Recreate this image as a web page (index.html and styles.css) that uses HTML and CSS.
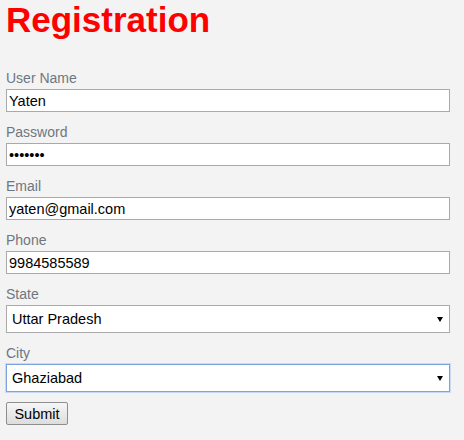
FILE: index.html
```html
<!DOCTYPE html>
<html>
<head>
<meta charset="utf-8">
<link rel="stylesheet" href="styles.css">
</head>
<body>
<h1 class="title">Registration</h1>
<form class="form">
  <div class="field">
    <label class="label">User Name</label>
    <input class="input" type="text" value="Yaten">
  </div>
  <div class="field">
    <label class="label">Password</label>
    <input class="input" type="password" value="1234567">
  </div>
  <div class="field">
    <label class="label">Email</label>
    <input class="input" type="text" value="yaten@gmail.com">
  </div>
  <div class="field">
    <label class="label">Phone</label>
    <input class="input" type="text" value="9984585589">
  </div>
  <div class="field">
    <label class="label">State</label>
    <div class="select-wrap">
      <select class="select"><option>Uttar Pradesh</option></select>
    </div>
  </div>
  <div class="field">
    <label class="label">City</label>
    <div class="select-wrap">
      <select class="select focused"><option>Ghaziabad</option></select>
    </div>
  </div>
  <div class="actions">
    <button class="button" type="button">Submit</button>
  </div>
</form>
</body>
</html>
```

FILE: styles.css
```css
html, body {
  margin: 0;
  padding: 0;
  background: #f3f3f3;
}
body {
  padding: 0 14px 0 6px;
  font-family: "Liberation Sans", Arial, sans-serif;
}
.title {
  margin: 0;
  font-size: 35px;
  font-weight: bold;
  line-height: 40px;
  color: #ff0000;
}
.form {
  display: flex;
  flex-direction: column;
  gap: 12px;
  margin-top: 30px;
}
.field {
  display: flex;
  flex-direction: column;
  gap: 3px;
}
.label {
  display: block;
  font-size: 14px;
  line-height: 16px;
  color: #6e7780;
}
.input {
  box-sizing: border-box;
  width: 444px;
  height: 23px;
  margin: 0;
  padding: 0 2px;
  border: 1px solid #a9a9a9;
  background: #fff;
  font-family: "Liberation Sans", Arial, sans-serif;
  font-size: 14.5px;
  color: #000;
  outline: none;
}
.select-wrap {
  position: relative;
  width: 444px;
}
.select-wrap::after {
  content: "";
  position: absolute;
  right: 7px;
  top: 12px;
  border-left: 3px solid transparent;
  border-right: 3px solid transparent;
  border-top: 5px solid #000;
  pointer-events: none;
}
.select {
  box-sizing: border-box;
  display: block;
  width: 444px;
  height: 28px;
  margin: 0;
  padding: 0 20px 0 5px;
  border: 1px solid #a9a9a9;
  border-radius: 0;
  background: #fff;
  -webkit-appearance: none;
  appearance: none;
  font-family: "Liberation Sans", Arial, sans-serif;
  font-size: 14.5px;
  color: #000;
  outline: none;
}
.select.focused {
  border-color: #7ea4df;
  box-shadow: 0 0 0 1px #c8d9f3;
}
.actions {
  display: flex;
  margin-top: -2px;
}
.button {
  box-sizing: border-box;
  width: 62px;
  height: 23px;
  margin: 0;
  padding: 0;
  border: 1px solid #8e8e8e;
  border-radius: 2px;
  background: linear-gradient(#f6f6f6, #dddddd);
  font-family: "Liberation Sans", Arial, sans-serif;
  font-size: 14.5px;
  color: #000;
}
```
